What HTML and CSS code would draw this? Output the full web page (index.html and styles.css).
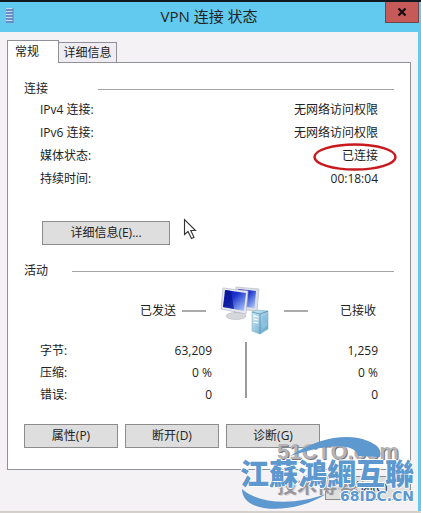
FILE: index.html
```html
<!DOCTYPE html>
<html lang="zh-CN">
<head>
  <meta charset="UTF-8">
  <meta name="viewport" content="width=device-width, initial-scale=1">
  <title>VPN 连接 状态</title>
  <link rel="stylesheet" href="styles.css">
</head>
<body>
  <div class="window">
    <header class="titlebar">
      <svg class="app-icon" viewBox="0 0 10 18">
        <rect x="1" y="1" width="7" height="15" fill="#c6dcf2"/>
        <path d="M1 3h7M1 6h7M1 9h7M1 12h7M1 15h7" stroke="#4a74b4" stroke-width="1.4"/>
        <path d="M8 1v15" stroke="#5f83b5"/>
      </svg>
      <h1>VPN 连接 状态</h1>
      <button class="close" aria-label="关闭">
        <svg viewBox="0 0 10 8"><path d="M1.500 .5L8.500 7.500M8.500 .5L1.500 7.500" stroke="#1c1012" stroke-width="2.300"/></svg>
      </button>
    </header>

    <main class="client">
      <div class="tabs" role="tablist">
        <button class="tab active" role="tab" aria-selected="true">常规</button>
        <button class="tab" role="tab" aria-selected="false">详细信息</button>
      </div>

      <div class="panel" role="tabpanel">
        <h2 class="group wide">连接</h2>
        <dl class="details">
          <div><dt>IPv4 连接:</dt><dd>无网络访问权限</dd></div>
          <div><dt>IPv6 连接:</dt><dd>无网络访问权限</dd></div>
          <div><dt>媒体状态:</dt><dd class="marked">已连接
            <svg class="ring" viewBox="0 0 84 28"><ellipse cx="42" cy="14" rx="40.500" ry="12.500" fill="none" stroke="#c8191e" stroke-width="2.500"/></svg>
          </dd></div>
          <div><dt>持续时间:</dt><dd>00:18:04</dd></div>
        </dl>
        <div class="more">
          <button class="btn">详细信息(E)...</button>
          <svg class="cursor" viewBox="0 0 14 22">
            <path d="M1.500 1.500V16.500L5 13.500L8.500 20.500L11 19.200L7.800 12.500H12.500z" fill="#fff" stroke="#333" stroke-width="1.100"/>
          </svg>
        </div>

        <h2 class="group">活动</h2>
        <div class="traffic">
          <span class="sent">已发送</span>
          <span class="dash"></span>
          <svg class="computers" viewBox="0 0 50 50">
            <defs>
              <linearGradient id="screen" x1="0" y1="0" x2="1" y2="1">
                <stop offset="0" stop-color="#0b16ad"/>
                <stop offset=".4" stop-color="#1c34cc"/>
                <stop offset="1" stop-color="#b8d4ff"/>
              </linearGradient>
              <linearGradient id="tower" x1="0" y1="0" x2="1" y2="1">
                <stop offset="0" stop-color="#d8effa"/>
                <stop offset="1" stop-color="#5d9fc4"/>
              </linearGradient>
            </defs>
            <path d="M16 1L39 3L37 25L17 23z" fill="#dcdfe6" stroke="#b9bdc7" stroke-width=".7"/>
            <path d="M18 3L36 5L34.500 22L18 20z" fill="url(#screen)"/>
            <path d="M14 24l7 1l-1 5h-6z" fill="#bfc1c7"/>
            <ellipse cx="16" cy="30" rx="10" ry="3.500" fill="#d6d7da" stroke="#aaacb1" stroke-width=".5"/>
            <path d="M3 2L28 5L26 28L1 23z" fill="#e7e9ef" stroke="#b4b9c7" stroke-width=".7"/>
            <path d="M5 4L26 7L24 25L3 21z" fill="url(#screen)"/>
            <path d="M6 4L11 5L14 23L3 21z" fill="#06128d" opacity=".7"/>
            <path d="M32 26L37 24L48 25V43L40 48L32 45z" fill="url(#tower)" stroke="#83b1ca" stroke-width=".6"/>
            <path d="M32 26L40 28L48 25M40 28V48" fill="none" stroke="#4f90b5" stroke-width=".8"/>
            <path d="M33.500 30l5 1M33.500 33l5 1M33.500 36l5 1" stroke="#fff" stroke-width="1.200"/>
            <path d="M42 31l5-2v4l-5 2zM42 38l5-2v4l-5 3z" fill="#8bc3df"/>
          </svg>
          <span class="dash"></span>
          <span class="received">已接收</span>
        </div>

        <table class="stats">
          <tbody>
            <tr><th scope="row">字节:</th><td class="out">63,209</td><td>1,259</td></tr>
            <tr><th scope="row">压缩:</th><td class="out">0 %</td><td>0 %</td></tr>
            <tr><th scope="row">错误:</th><td class="out">0</td><td>0</td></tr>
          </tbody>
        </table>

        <div class="actions">
          <button class="btn">属性(P)</button>
          <button class="btn">断开(D)</button>
          <button class="btn">诊断(G)</button>
        </div>
      </div>

      <div class="footer">
        <button class="btn">关闭(C)</button>
      </div>
    </main>

    <div class="watermark">
      <span class="blog">51CTO.com</span>
      <span class="blog-sub">技术博客</span>
      <svg class="swoosh" viewBox="0 0 176 74">
        <path d="M50 21C80 1 110-2 128 6C138 10 142 15 140 22L118 21C116 10 96 6 50 21z" fill="#5d98cf"/>
        <path d="M2 54C2 80 56 79 86 59C56 70 20 70 2 54z" fill="#5d98cf"/>
      </svg>
      <span class="brand">江蘇鴻網互聯</span>
      <span class="domain">68IDC.CN</span>
    </div>
  </div>
</body>
</html>
```

FILE: styles.css
```css
* {
  box-sizing: border-box;
}
body {
  margin: 0;
  background: #f5f2f6;
  font-family: "Open Sans", "Noto Sans CJK SC", sans-serif;
  font-size: 12px;
  line-height: 18px;
  color: #222;
}
h1, h2, dl, dd {
  margin: 0;
  font-weight: normal;
}
button {
  font: inherit;
  color: inherit;
  padding: 0;
}
.window {
  position: relative;
  min-height: 100vh;
  display: flex;
  flex-direction: column;
  border-top: 2px solid #101820;
  border-bottom: 2px solid #d5d0cb;
}
.titlebar {
  display: flex;
  align-items: flex-start;
  height: 30px;
  padding: 0 2px 0 5px;
  background: #62caee;
}
.app-icon {
  width: 10px;
  height: 18px;
  margin-top: 5px;
}
.titlebar h1 {
  flex: 1;
  padding-left: 18px;
  font-size: 15px;
  line-height: 29px;
  text-align: center;
}
.close {
  display: flex;
  align-items: center;
  justify-content: center;
  width: 34px;
  height: 21px;
  background: #c65a58;
  border: 1px solid #71464d;
  border-top: 0;
}
.close svg {
  width: 10px;
  height: 8px;
}
.client {
  flex: 1;
  padding: 8px 7px 0;
  border-right: 3px solid #62caee;
}
/* Tabs */
.tabs {
  display: flex;
  align-items: flex-end;
}
.tab {
  height: 20px;
  width: 58px;
  background: #efedf1;
  border: 1px solid #8f9098;
  border-left: 0;
  border-bottom: 0;
}
.tab.active {
  position: relative;
  width: 52px;
  height: 23px;
  margin-bottom: -1px;
  padding-right: 12px;
  background: #fff;
  border-left: 1px solid #8f9098;
}
.panel {
  padding: 17px 16px 21px;
  background: #fff;
  border: 1px solid #8f9098;
}
.group {
  display: flex;
  align-items: center;
  gap: 24px;
  font-size: 12px;
  line-height: 18px;
}
.group.wide {
  gap: 50px;
}
.group::after {
  content: "";
  flex: 1;
  height: 1px;
  background: #a3a3a3;
}
.details {
  padding: 0 16px;
}
.details div {
  display: flex;
  justify-content: space-between;
  line-height: 23px;
}
.marked {
  position: relative;
}
.ring {
  position: absolute;
  top: -1px;
  right: -19px;
  width: 84px;
  height: 28px;
}
.btn {
  flex: 0 0 94px;
  height: 24px;
  background: #dedede;
  border: 1px solid #8c8c8c;
}
.more {
  display: flex;
  gap: 13px;
  margin: 31px 0 17px 18px;
}
.more .btn {
  flex-basis: 128px;
}
.cursor {
  width: 14px;
  height: 22px;
  margin-top: -3px;
}
/* Activity */
.traffic {
  display: grid;
  grid-template-columns: 2fr 24px 50px 24px 1fr;
  align-items: center;
  column-gap: 14px;
  height: 50px;
  margin-top: 6px;
}
.sent {
  text-align: right;
  margin-right: -8px;
}
.received {
  text-align: right;
  padding-right: 18px;
}
.dash {
  height: 2px;
  background: #aaa;
}
.computers {
  width: 50px;
  height: 50px;
}
.stats {
  width: 100%;
  border-collapse: collapse;
  line-height: 22px;
  margin-top: 4px;
  background: linear-gradient(#9c9c9c, #9c9c9c) 60% 2px / 2px 56px no-repeat;
}
.stats th {
  width: 40%;
  padding: 0 0 0 16px;
  font-weight: normal;
  text-align: left;
}
.stats td {
  padding: 0 16px 0 0;
  text-align: right;
}
.stats .out {
  width: 20%;
  padding-right: 34px;
}
.actions {
  display: flex;
  gap: 7px;
  margin-top: 18px;
}
.footer {
  display: flex;
  justify-content: flex-end;
  padding: 6px 0;
}
.footer .btn {
  flex-basis: 86px;
}
/* Site stamp over the corner of the dialog */
.watermark {
  position: absolute;
  right: 5px;
  bottom: 2px;
  width: 176px;
  height: 74px;
  white-space: nowrap;
  pointer-events: none;
}
.watermark span,
.swoosh {
  position: absolute;
}
.swoosh {
  left: 0;
  top: 0;
  width: 176px;
  height: 74px;
}
.blog {
  left: 37px;
  top: 3px;
  font: bold 22px/28px "Liberation Sans", sans-serif;
  color: #b5b3b6;
  text-shadow: 1px 1px 0 #77757a;
}
.blog-sub {
  left: 37px;
  top: 38px;
  font: bold 20px/24px "Noto Sans CJK SC", sans-serif;
  color: #98969a;
  text-shadow: 1px 1px 0 #d8d6da;
}
.brand {
  left: 0;
  top: 20px;
  font: 900 29px/34px "Noto Sans CJK TC", sans-serif;
  color: #5d98cf;
  text-shadow: 1px 0 #fff, -1px 0 #fff, 0 1px #fff, 0 -1px #fff;
}
.domain {
  right: 2px;
  bottom: 6px;
  font: bold 14px/14px "DejaVu Sans", sans-serif;
  color: #5d98cf;
  text-shadow: 1px 0 #fff, -1px 0 #fff, 0 1px #fff, 0 -1px #fff;
}
```
